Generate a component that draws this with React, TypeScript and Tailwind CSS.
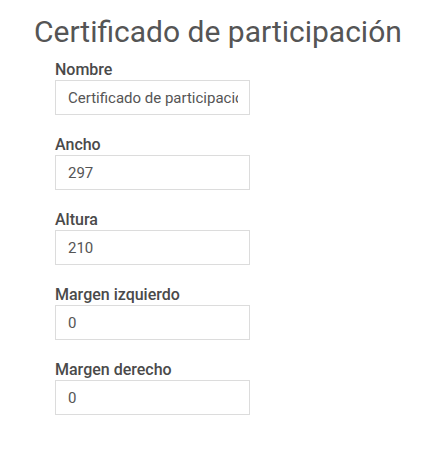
import React from "react";

const fields = [
  { label: "Nombre", value: "Certificado de participación" },
  { label: "Ancho", value: "297" },
  { label: "Altura", value: "210" },
  { label: "Margen izquierdo", value: "0" },
  { label: "Margen derecho", value: "0" },
];

export default function App() {
  return (
    <div
      className="w-[444px] h-[454px] bg-white"
      style={{ fontFamily: "Roboto, 'Liberation Sans', sans-serif" }}
    >
      <h1 className="pt-[14px] pl-[34px] text-[30px] leading-[36px] text-[#555555] font-normal whitespace-nowrap">
        Certificado de participación
      </h1>
      <div className="pl-[55px] pt-[10px] flex flex-col gap-[20px]">
        {fields.map((f) => (
          <div key={f.label} className="flex flex-col">
            <label className="text-[16px] leading-[20px] font-medium text-[#4a4a4a]">
              {f.label}
            </label>
            <input
              readOnly
              value={f.value}
              className="w-[195px] h-[35px] border border-[#dcdcdc] pl-[12px] pr-[11px] text-[15px] text-[#555555] outline-none"
              style={{ fontFamily: "Roboto, 'Liberation Sans', sans-serif" }}
            />
          </div>
        ))}
      </div>
    </div>
  );
}
